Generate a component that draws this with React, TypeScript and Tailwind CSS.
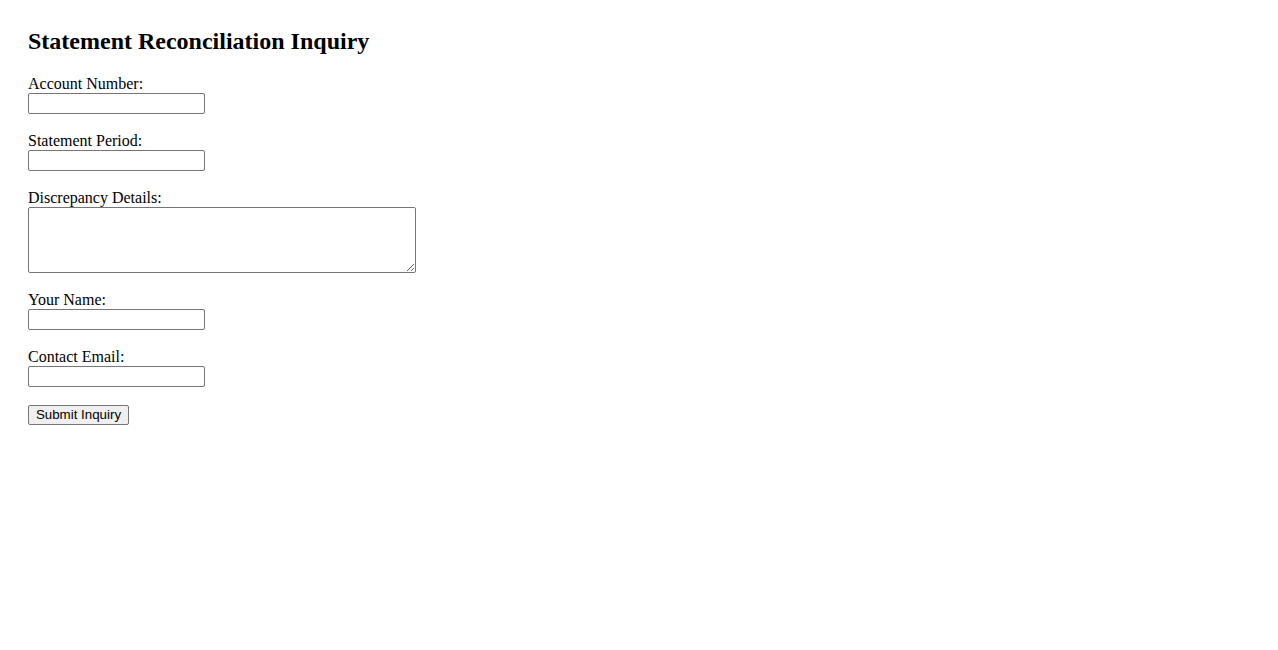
export default function App() {
  const fields = [
    { label: "Account Number:", id: "account" },
    { label: "Statement Period:", id: "period" },
  ];
  const inputCls =
    "block h-[21px] w-[177px] rounded-[2px] border border-[#767676] bg-white px-[2px] text-[13.33px] font-['Liberation_Sans',sans-serif]";

  return (
    <div className="min-h-screen bg-white px-[28px] pt-[28px] font-['Liberation_Serif',serif] text-black">
      <h2 className="mb-[19px] text-[24px] font-bold leading-[27px]">Statement Reconciliation Inquiry</h2>
      <form className="flex flex-col items-start" onSubmit={(e) => e.preventDefault()}>
        {fields.map((f) => (
          <div key={f.id} className="mb-[17px]">
            <label htmlFor={f.id} className="block text-[16px] leading-[19px]">
              {f.label}
            </label>
            <input id={f.id} type="text" className={inputCls} />
          </div>
        ))}
        <div className="mb-[17px]">
          <label htmlFor="details" className="block text-[16px] leading-[19px]">
            Discrepancy Details:
          </label>
          <textarea
            id="details"
            className="block h-[66px] w-[388px] resize rounded-[2px] border border-[#767676] bg-white px-[2px] text-[13.33px] font-['Liberation_Mono',monospace]"
          />
        </div>
        <div className="mb-[17px]">
          <label htmlFor="name" className="block text-[16px] leading-[19px]">
            Your Name:
          </label>
          <input id="name" type="text" className={inputCls} />
        </div>
        <div className="mb-[18px]">
          <label htmlFor="email" className="block text-[16px] leading-[19px]">
            Contact Email:
          </label>
          <input id="email" type="email" className={inputCls} />
        </div>
        <button
          type="submit"
          className="h-[20px] w-[101px] rounded-[2px] border border-[#767676] bg-[#efefef] px-[6px] text-[13.33px] leading-[18px] font-['Liberation_Sans',sans-serif] text-black"
        >
          Submit Inquiry
        </button>
      </form>
    </div>
  );
}
